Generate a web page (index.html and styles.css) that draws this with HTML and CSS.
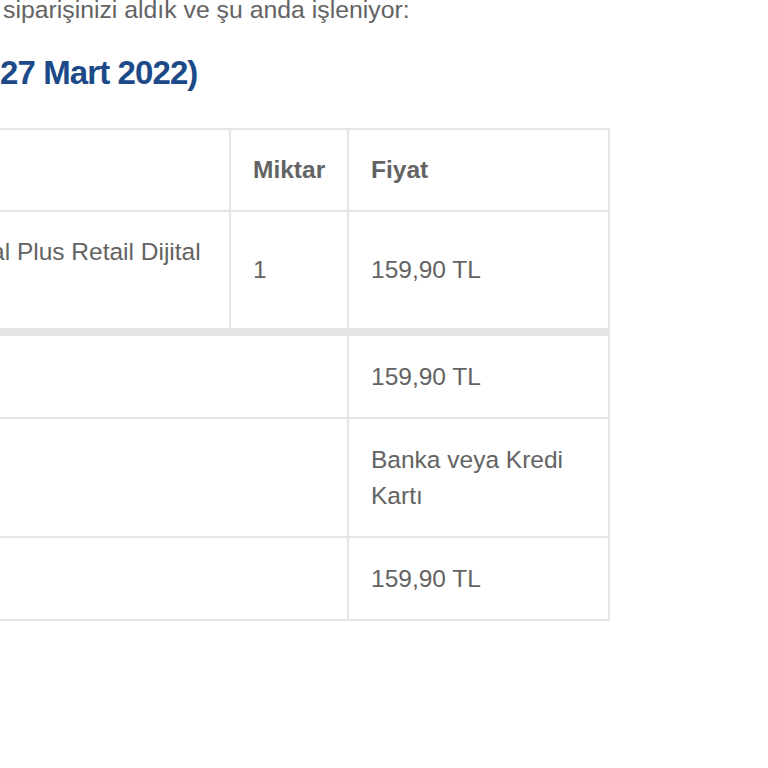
FILE: index.html
```html
<!DOCTYPE html>
<html lang="tr">
<head>
<meta charset="utf-8">
<title>Sipariş</title>
<link rel="stylesheet" href="styles.css">
</head>
<body>
<div class="email">
  <p class="intro">siparişinizi aldık ve şu anda işleniyor:</p>
  <h2 class="order-title">27 Mart 2022)</h2>
  <table class="order-table">
    <thead>
      <tr>
        <th class="col-product"></th>
        <th class="col-qty">Miktar</th>
        <th class="col-price">Fiyat</th>
      </tr>
    </thead>
    <tbody>
      <tr>
        <td class="col-product"><span class="product-name">al Plus Retail Dijital</span><br>&nbsp;</td>
        <td class="col-qty">1</td>
        <td class="col-price">159,90 TL</td>
      </tr>
    </tbody>
    <tfoot>
      <tr class="first-total">
        <th class="total-label" colspan="2"></th>
        <td class="col-price">159,90 TL</td>
      </tr>
      <tr>
        <th class="total-label" colspan="2"></th>
        <td class="col-price">Banka veya Kredi Kartı</td>
      </tr>
      <tr>
        <th class="total-label" colspan="2"></th>
        <td class="col-price">159,90 TL</td>
      </tr>
    </tfoot>
  </table>
</div>
</body>
</html>
```

FILE: styles.css
```css
html, body {
  margin: 0;
  padding: 0;
  background: #ffffff;
}

body {
  font-family: "Liberation Sans", Arial, Helvetica, sans-serif;
  color: #636363;
  overflow: hidden;
}

.email {
  margin-top: -8px;
}

.intro {
  margin: 0 0 23px 0;
  padding-left: 3px;
  font-size: 24.8px;
  line-height: 36px;
}

.order-title {
  margin: 0 0 34px 0;
  font-size: 33px;
  line-height: 43px;
  font-weight: bold;
  color: #1c4a88;
  letter-spacing: -0.9px;
}

.order-table {
  border-collapse: separate;
  border-spacing: 0;
  table-layout: fixed;
  width: 610px;
  border-top: 2px solid #e5e5e5;
  font-size: 24.5px;
  line-height: 36px;
}

.order-table th,
.order-table td {
  box-sizing: border-box;
  padding: 22px;
  border-right: 2px solid #e5e5e5;
  border-bottom: 2px solid #e5e5e5;
  text-align: left;
  vertical-align: middle;
  color: #636363;
}

.order-table th {
  font-weight: bold;
}

.order-table thead .col-product {
  width: 231px;
}

.order-table thead .col-qty {
  width: 118px;
}

.order-table thead .col-price {
  width: 261px;
}

.order-table td.col-product {
  padding-left: 0;
  text-indent: -9px;
  white-space: nowrap;
  overflow: hidden;
}

.order-table tfoot th,
.order-table tfoot td {
  padding-top: 22.5px;
  padding-bottom: 22.5px;
}

.order-table .first-total th,
.order-table .first-total td {
  border-top: 6px solid #e5e5e5;
}
```
